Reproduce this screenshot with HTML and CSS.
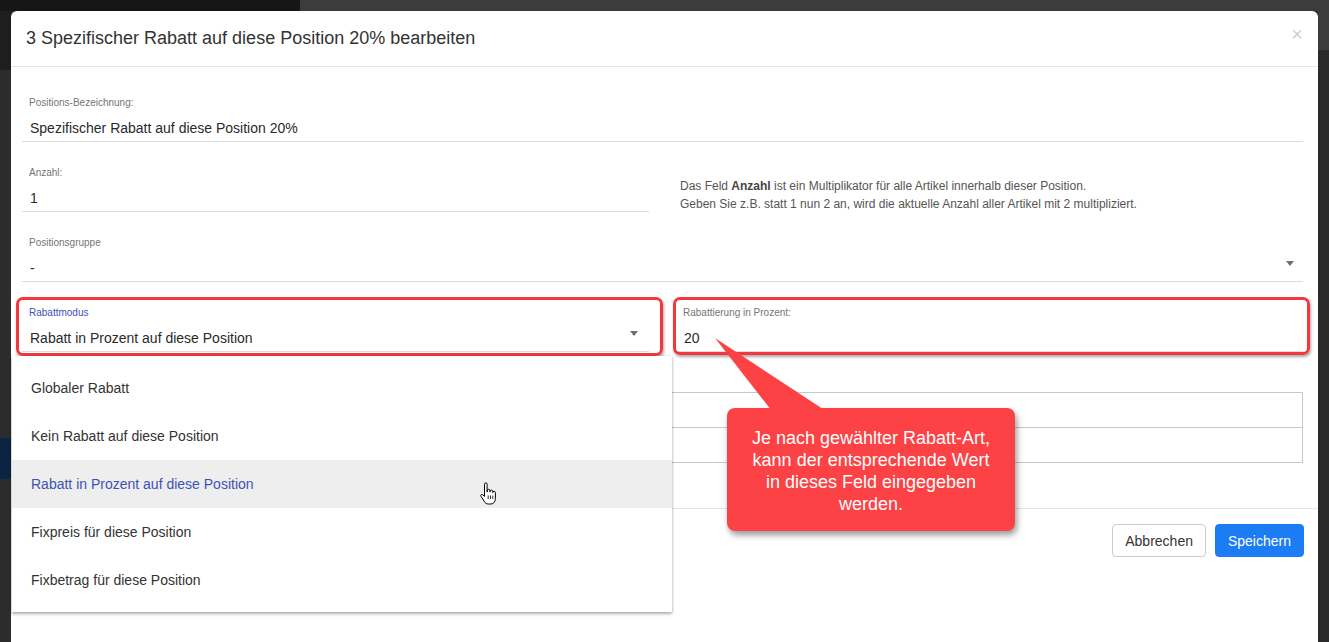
FILE: index.html
```html
<!DOCTYPE html>
<html lang="de">
<head>
<meta charset="utf-8">
<title>Position bearbeiten</title>
<link rel="stylesheet" href="styles.css">
</head>
<body>
<div class="modal">
  <div class="modal-header">
    <h4 class="modal-title">3 Spezifischer Rabatt auf diese Position 20% bearbeiten</h4>
    <span class="close">×</span>
  </div>
  <div class="modal-body">
    <div class="field">
      <label class="field-label">Positions-Bezeichnung:</label>
      <div class="field-value">Spezifischer Rabatt auf diese Position 20%</div>
    </div>
    <div class="row">
      <div class="field">
        <label class="field-label">Anzahl:</label>
        <div class="field-value">1</div>
      </div>
      <div class="help">Das Feld <b>Anzahl</b> ist ein Multiplikator für alle Artikel innerhalb dieser Position.<br>Geben Sie z.B. statt 1 nun 2 an, wird die aktuelle Anzahl aller Artikel mit 2 multipliziert.</div>
    </div>
    <div class="field select">
      <label class="field-label">Positionsgruppe</label>
      <div class="field-value">-</div>
      <span class="caret"></span>
    </div>
    <div class="row">
      <div class="field select focused mark mark-left">
        <label class="field-label">Rabattmodus</label>
        <div class="field-value">Rabatt in Prozent auf diese Position</div>
        <span class="caret"></span>
      </div>
      <div class="field mark mark-right">
        <label class="field-label">Rabattierung in Prozent:</label>
        <div class="field-value">20</div>
      </div>
    </div>
    <div class="table">
      <div class="table-row"></div>
      <div class="table-row"></div>
    </div>
  </div>
  <div class="modal-footer">
    <button class="btn btn-default">Abbrechen</button>
    <button class="btn btn-primary">Speichern</button>
  </div>

  <ul class="menu">
    <li class="menu-item">Globaler Rabatt</li>
    <li class="menu-item">Kein Rabatt auf diese Position</li>
    <li class="menu-item active">Rabatt in Prozent auf diese Position</li>
    <li class="menu-item">Fixpreis für diese Position</li>
    <li class="menu-item">Fixbetrag für diese Position</li>
  </ul>

  <svg class="cursor" width="18" height="24" viewBox="0 0 18 24">
    <path d="M5.5 2.2a1.3 1.3 0 0 1 2.6 0V10h.2V8.6a1.3 1.3 0 0 1 2.6 0V10h.2V9.4a1.3 1.3 0 0 1 2.6 0V10.6h.1a1.3 1.3 0 0 1 2.6 0V16.5c0 3.3-1.9 5.5-4.6 5.5H9.3c-1.8 0-2.9-.8-3.8-2.2L2 14.3c-.7-1.1.6-2.4 1.7-1.6L5.5 14.4Z" fill="#fff" stroke="#000" stroke-width="1" stroke-linejoin="round"/>
    <path d="M9.2 17v-3.5M11.5 17v-3.5M13.8 17v-3.5" stroke="#000" stroke-width="0.8"/>
  </svg>

  <div class="callout">Je nach gewählter Rabatt-Art,<br>kann der entsprechende Wert<br>in dieses Feld eingegeben<br>werden.</div>
  <svg class="tail" width="160" height="100" viewBox="0 0 160 100">
    <polygon points="14,7 74,84 131,84" fill="#fc4245"/>
  </svg>
</div>
</body>
</html>
```
FILE: styles.css
```css
html, body {
  margin: 0;
  height: 642px;
  overflow: hidden;
}
body {
  padding: 11px 11px 0 11px;
  box-sizing: border-box;
  font-family: "Liberation Sans", Arial, sans-serif;
  color: #333;
  background:
    linear-gradient(to right, #161616 300px, #3c3c3c 300px) left top / 100% 11px no-repeat,
    linear-gradient(to bottom, #1e1e1e 70px, #2c2c2c 70px, #2c2c2c 438px, #0c2442 438px, #0c2442 479px, #2c2c2c 479px) left top / 11px 100% no-repeat,
    linear-gradient(to bottom, #3c3c3c 50px, #2a2a2a 50px) right top / 11px 100% no-repeat,
    #2a2a2a;
}

.modal {
  position: relative;
  width: 1307px;
  height: 650px;
  background: #fff;
  border-radius: 6px 6px 0 0;
}

.modal-header {
  height: 55px;
  border-bottom: 1px solid #e5e5e5;
  display: flex;
  align-items: center;
  justify-content: space-between;
  padding: 0 15px 0 15px;
}
.modal-title {
  margin: 0;
  font-size: 18px;
  font-weight: normal;
  color: #333;
}
.close {
  font-size: 20px;
  font-weight: normal;
  color: #cfcfcf;
  line-height: 1;
  margin-top: -9px;
}

.modal-body {
  padding: 23px 15px 45px 11px;
}

.row {
  display: grid;
  grid-template-columns: 627px 627px;
  column-gap: 27px;
}

.field {
  position: relative;
  padding: 7px 0 3px;
  border-bottom: 1px solid #dcdcdc;
  margin-bottom: 18px;
}
.field-label {
  display: block;
  font-size: 10px;
  line-height: 12px;
  color: #757575;
  padding-left: 7px;
}
.field-value {
  margin-top: 9px;
  font-size: 14px;
  line-height: 20px;
  color: #2a2a2a;
  padding-left: 8px;
}
.focused .field-label {
  color: #3f51b5;
}
.caret {
  position: absolute;
  right: 9px;
  bottom: 15px;
  width: 0;
  height: 0;
  border-left: 4px solid transparent;
  border-right: 4px solid transparent;
  border-top: 5px solid #6f6f6f;
}
.mark-left .caret {
  right: 11px;
}

.mark::after {
  content: "";
  position: absolute;
  border: 3px solid #f2383d;
  border-radius: 7px;
  box-shadow: 1px 2px 3px rgba(0, 0, 0, 0.35);
  pointer-events: none;
}
.mark-left::after {
  top: -3px;
  left: -6px;
  right: -14px;
  bottom: -5px;
}
.mark-right::after {
  top: -3px;
  left: -3px;
  right: -7px;
  bottom: -4px;
}

.help {
  padding: 17px 0 0 4px;
  font-size: 12px;
  line-height: 18px;
  color: #555;
}
.help b {
  color: #444;
}

.table {
  margin-top: 22px;
  border: 1px solid #c8c8c8;
  border-bottom: 0;
}
.table-row {
  height: 34px;
  border-bottom: 1px solid #c8c8c8;
}

.modal-footer {
  border-top: 1px solid #e5e5e5;
  padding: 15px 14px 15px 15px;
  display: flex;
  justify-content: flex-end;
  gap: 9px;
}
.btn {
  height: 33px;
  padding: 0 12px;
  font-family: "Liberation Sans", Arial, sans-serif;
  font-size: 14px;
  border-radius: 4px;
  border: 1px solid #ccc;
  background: #fff;
  color: #333;
}
.btn-primary {
  background: #1b7cf4;
  border-color: #1b7cf4;
  color: #fff;
}

.menu {
  position: absolute;
  left: 1px;
  top: 345px;
  width: 660px;
  margin: 0;
  padding: 8px 0;
  list-style: none;
  background: #fff;
  box-shadow: 0 2px 3px rgba(0, 0, 0, 0.3), 0 0 2px rgba(0, 0, 0, 0.15);
}
.menu-item {
  height: 48px;
  line-height: 48px;
  padding-left: 19px;
  font-size: 14px;
  color: #333;
}
.menu-item.active {
  background: #eeeeee;
  color: #3f51b5;
}

.cursor {
  position: absolute;
  left: 468px;
  top: 471px;
}

.callout {
  position: absolute;
  left: 716px;
  top: 397px;
  width: 288px;
  height: 123px;
  box-sizing: border-box;
  padding-top: 19px;
  background: #fc4245;
  border-radius: 8px;
  box-shadow: 2px 4px 6px rgba(0, 0, 0, 0.4);
  color: #fff;
  font-size: 18px;
  line-height: 22px;
  text-align: center;
}
.tail {
  position: absolute;
  left: 690px;
  top: 320px;
}
```
